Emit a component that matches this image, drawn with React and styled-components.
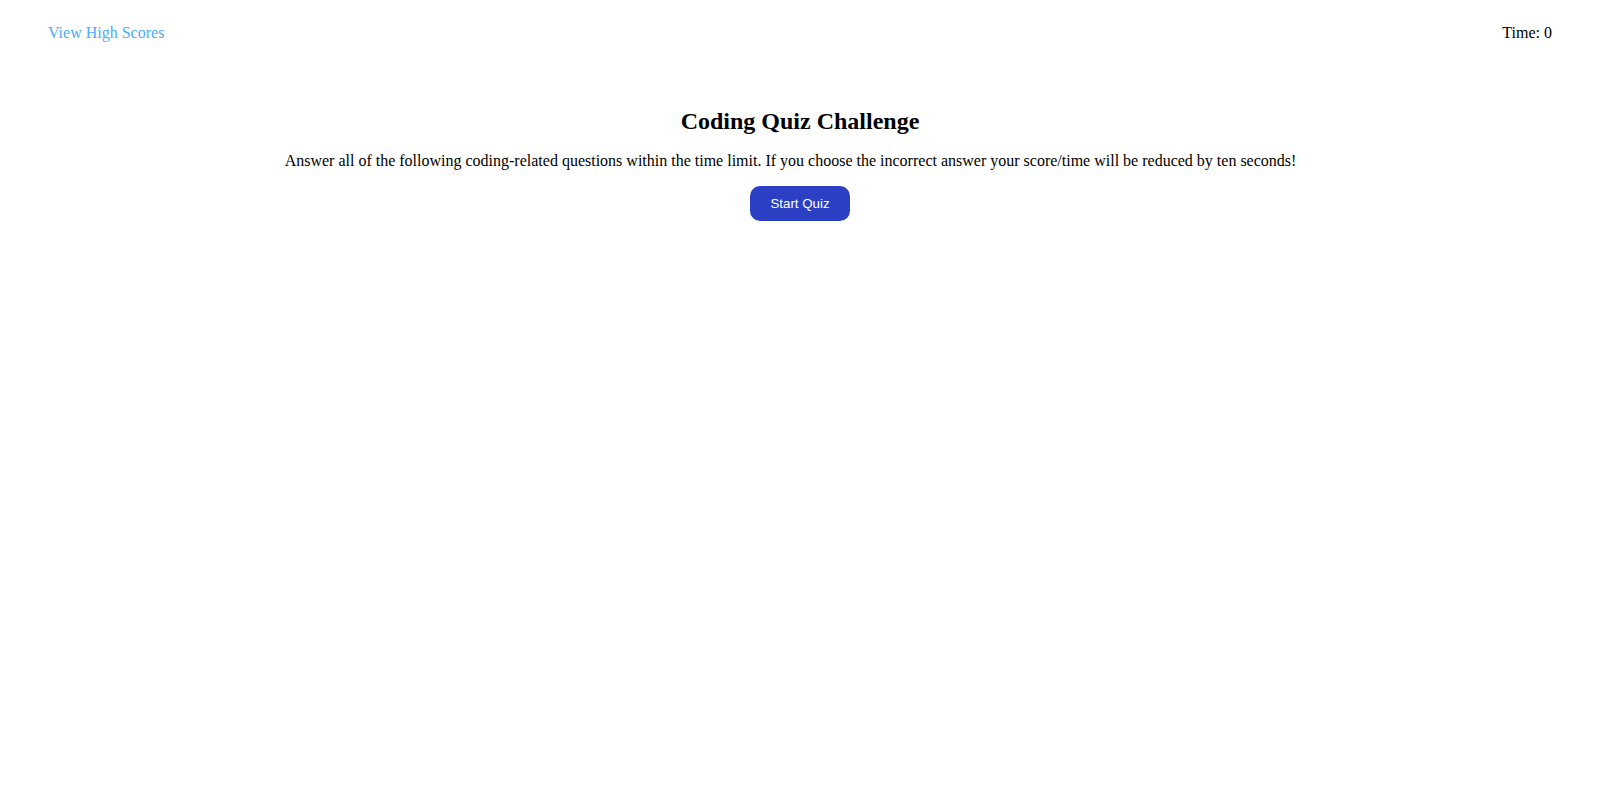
import React from 'react';
import styled, { createGlobalStyle } from 'styled-components';

const GlobalStyle = createGlobalStyle`
  body {
    margin: 8px;
    background: #ffffff;
    font-family: "Liberation Serif", "Times New Roman", serif;
    color: #000000;
  }
`;

const Header = styled.header`
  display: flex;
  justify-content: space-between;
  align-items: center;
  padding: 16px 40px 12px;
  font-size: 16px;
`;

const HighScoresLink = styled.a`
  color: #4aabff;
  text-decoration: none;
  cursor: pointer;
`;

const Timer = styled.div`
  color: #000000;
`;

const Intro = styled.main`
  display: flex;
  flex-direction: column;
  align-items: center;
  text-align: center;
  margin-top: 54px;
`;

const Title = styled.h2`
  font-size: 24px;
  font-weight: bold;
  margin: 0 0 17px;
`;

// text sits a little left of centre in the original
const Lead = styled.p`
  font-size: 16px;
  margin: 0 0 16px;
  padding-right: 19px;
`;

const StartButton = styled.button`
  background-color: #2b3fc4;
  color: #ffffff;
  border: none;
  border-radius: 10px;
  padding: 0 20px;
  height: 35px;
  font-family: "Liberation Sans", Arial, sans-serif;
  font-size: 13.3px;
  cursor: pointer;
`;

export default function App() {
  return (
    <>
      <GlobalStyle />
      <Header>
        <HighScoresLink>View High Scores</HighScoresLink>
        <Timer>Time: 0</Timer>
      </Header>
      <Intro>
        <Title>Coding Quiz Challenge</Title>
        <Lead>
          Answer all of the following coding-related questions within the time limit. If you choose the incorrect answer your score/time will be reduced by ten seconds!
        </Lead>
        <StartButton>Start Quiz</StartButton>
      </Intro>
    </>
  );
}
